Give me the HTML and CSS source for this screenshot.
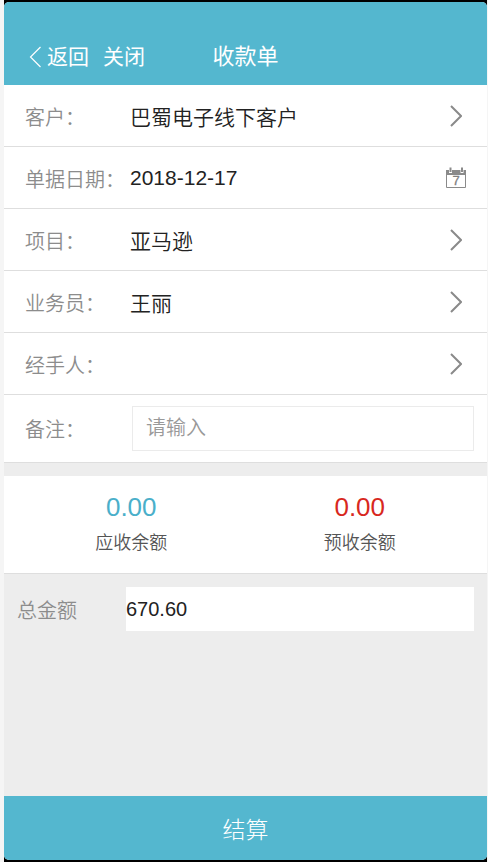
FILE: index.html
```html
<!DOCTYPE html>
<html lang="zh-CN">
<head>
<meta charset="utf-8">
<meta name="viewport" content="width=device-width, initial-scale=1">
<title>收款单</title>
<link rel="stylesheet" href="styles.css">
</head>
<body>
<div class="device">
  <div class="screen">
    <header class="topbar">
      <nav class="nav">
        <a class="nav-link" href="#"><svg class="back-icon" viewBox="0 0 13 22" aria-hidden="true"><path d="M11.5 1 1.5 11l10 10"/></svg>返回</a>
        <a class="nav-link" href="#">关闭</a>
      </nav>
      <h1 class="title">收款单</h1>
    </header>

    <main class="content">
      <button class="row" type="button">
        <span class="label">客户：</span>
        <span class="value">巴蜀电子线下客户</span>
        <svg class="chevron" viewBox="0 0 12 22" aria-hidden="true"><path d="M1 1l10 10L1 21"/></svg>
      </button>
      <button class="row" type="button">
        <span class="label">单据日期：</span>
        <span class="value">2018-12-17</span>
        <svg class="calendar" viewBox="0 0 22 22" aria-hidden="true">
          <path class="frame" d="M1.5 4v16.500h19V4"/>
          <path class="band" d="M1 3h20v5H1z"/>
          <path class="ring-gap" d="M5.500 1v5M17 1v5"/>
          <path class="ring" d="M5.500 .5v4.500M17 .5v4.500"/>
          <text class="digit" x="11" y="18">7</text>
        </svg>
      </button>
      <button class="row" type="button">
        <span class="label">项目：</span>
        <span class="value">亚马逊</span>
        <svg class="chevron" viewBox="0 0 12 22" aria-hidden="true"><path d="M1 1l10 10L1 21"/></svg>
      </button>
      <button class="row" type="button">
        <span class="label">业务员：</span>
        <span class="value">王丽</span>
        <svg class="chevron" viewBox="0 0 12 22" aria-hidden="true"><path d="M1 1l10 10L1 21"/></svg>
      </button>
      <button class="row" type="button">
        <span class="label">经手人：</span>
        <span class="value"></span>
        <svg class="chevron" viewBox="0 0 12 22" aria-hidden="true"><path d="M1 1l10 10L1 21"/></svg>
      </button>
      <div class="row remark">
        <label class="label" for="remark">备注：</label>
        <input class="remark-input" id="remark" type="text" placeholder="请输入">
      </div>

      <section class="summary">
        <div class="stat">
          <span class="amount receivable">0.00</span>
          <span class="caption">应收余额</span>
        </div>
        <div class="stat">
          <span class="amount advance">0.00</span>
          <span class="caption">预收余额</span>
        </div>
      </section>

      <div class="total">
        <label class="total-label" for="total">总金额</label>
        <input class="total-input" id="total" type="text" value="670.60">
      </div>
    </main>

    <button class="submit" type="button">结算</button>
  </div>
</div>
</body>
</html>
```
FILE: styles.css
```css
* {
  box-sizing: border-box;
}

body {
  margin: 0;
  padding: 0 1px 0 4px;
  background: #f5f5f5;
  font-family: "Liberation Sans", "Noto Sans CJK SC", sans-serif;
  font-weight: 350;
}

button,
input {
  margin: 0;
  border: 0;
  border-radius: 0;
  font: inherit;
}

.device {
  display: flex;
  min-height: 100vh;
  padding: 2px 0;
  background: #000;
}

.screen {
  flex: 1;
  display: flex;
  flex-direction: column;
  overflow: hidden;
  border-radius: 5px;
  background: #ededed;
}

.topbar {
  display: grid;
  grid-template-columns: 1fr auto 1fr;
  align-items: center;
  padding: 38px 0 12px;
  background: #54b7cf;
  color: #fff;
  font-weight: 400;
  line-height: 33px;
}

.nav {
  display: flex;
  gap: 14px;
  padding-left: 25px;
}

.nav-link {
  display: flex;
  align-items: center;
  gap: 5px;
  color: inherit;
  font-size: 21px;
  text-decoration: none;
}

.back-icon {
  width: 13px;
  height: 22px;
  fill: none;
  stroke: #fff;
  stroke-width: 1.2;
}

.title {
  margin: 0;
  font-size: 22px;
  font-weight: 400;
}

.content {
  flex: 1;
}

.row {
  display: flex;
  align-items: center;
  width: 100%;
  height: 62px;
  padding: 1px 20px 0 21px;
  border-bottom: 1px solid #dedede;
  background: #fff;
  text-align: left;
}

.label {
  flex: 0 0 105px;
  color: #8c8c8c;
  font-size: 20px;
  white-space: nowrap;
}

.value {
  flex: 1;
  color: #222;
  font-size: 21px;
}

.chevron {
  width: 12px;
  height: 22px;
  margin-right: 5px;
  fill: none;
  stroke: #8a8a8a;
  stroke-width: 2;
}

.calendar {
  width: 22px;
  height: 22px;
  fill: none;
  stroke: #8a8a8a;
}

.calendar .band {
  fill: #8a8a8a;
  stroke: none;
}

.calendar .ring-gap {
  stroke: #fff;
  stroke-width: 3;
}

.calendar .ring {
  stroke-width: 2;
}

.calendar .digit {
  fill: #808080;
  stroke: #808080;
  stroke-width: 0.3;
  font-size: 13px;
  text-anchor: middle;
}

.remark {
  height: 68px;
  padding: 0 13px 0 21px;
}

.remark .label {
  flex-basis: 107px;
}

.remark-input {
  flex: 1;
  min-width: 0;
  height: 45px;
  padding: 0 13px;
  border: 1px solid #ebebeb;
  background: #fff;
  color: #222;
  font-size: 20px;
}

.remark-input::placeholder {
  color: #999;
}

.summary {
  display: flex;
  margin-top: 13px;
  padding: 14px 13px 17px;
  border-bottom: 1px solid #dedede;
  background: #fff;
}

.stat {
  flex: 1;
  display: flex;
  flex-direction: column;
  align-items: center;
  gap: 6px;
}

.amount {
  font-size: 26px;
  line-height: 34px;
}

.receivable {
  color: #4aafca;
}

.advance {
  color: #d8281e;
}

.caption {
  color: #555;
  font-size: 18px;
  line-height: 26px;
}

.total {
  display: flex;
  align-items: center;
  padding: 13px;
}

.total-label {
  flex: 0 0 109px;
  color: #8c8c8c;
  font-size: 20px;
}

.total-input {
  flex: 1;
  min-width: 0;
  height: 44px;
  padding: 0;
  background: #fff;
  color: #222;
  font-size: 20px;
}

.submit {
  height: 64px;
  background: #54b7cf;
  color: #fff;
  font-size: 23px;
  font-weight: 300;
}
```
